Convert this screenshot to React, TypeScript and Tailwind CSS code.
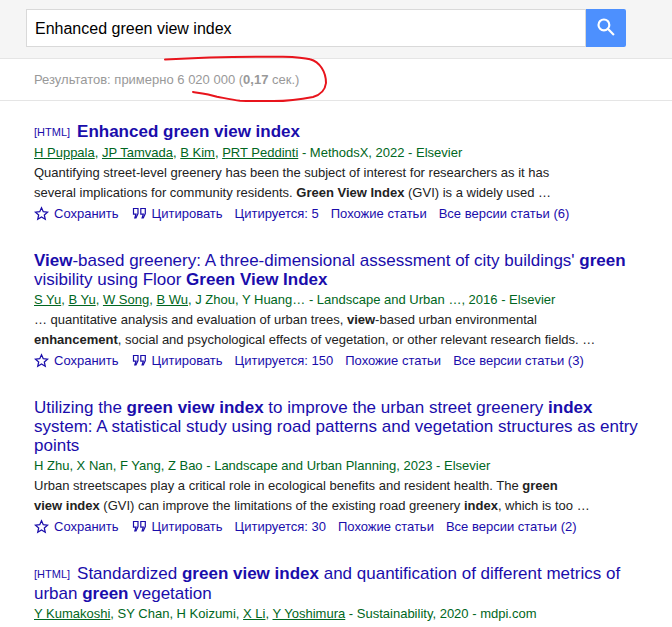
import React from "react";

const Star = () => (
  <svg width="15" height="15" viewBox="0 0 24 24" fill="none" stroke="#1a0dab" strokeWidth="2" className="shrink-0">
    <path d="M12 2.8l2.8 6.3 6.9.7-5.2 4.6 1.5 6.8-6-3.5-6 3.5 1.5-6.8-5.2-4.6 6.9-.7z" />
  </svg>
);
const Quote = () => (
  <svg width="15" height="15" viewBox="0 0 15 15" fill="none" stroke="#1a0dab" strokeWidth="1.2" className="shrink-0">
    <path d="M1.5 2.5h4.5v5l-2 4.5h-1.2l1.2-3.8H1.5z" />
    <path d="M8.8 2.5h4.5v5l-2 4.5h-1.2l1.2-3.8H8.8z" />
  </svg>
);

const B = ({ children }: { children: React.ReactNode }) => <b className="font-bold">{children}</b>;
const U = ({ children }: { children: React.ReactNode }) => <span className="underline">{children}</span>;

function Actions({ cited, versions }: { cited: string; versions: string }) {
  return (
    <div className="flex items-center gap-[12px] text-[13px] leading-[20px] text-[#1a0dab] mt-[1.5px]">
      <span className="flex items-center gap-[5px] mr-[1px]"><Star />Сохранить</span>
      <span className="flex items-center gap-[5px]"><Quote />Цитировать</span>
      <span>Цитируется: {cited}</span>
      <span>Похожие статьи</span>
      <span>Все версии статьи ({versions})</span>
    </div>
  );
}

function Result({ title, authors, snippet, cited, versions, className }: {
  title: React.ReactNode; authors: React.ReactNode; snippet?: React.ReactNode; cited?: string; versions?: string; className: string;
}) {
  return (
    <div className={className}>
      <div className="text-[17px] leading-[19px] text-[#1a0dab]">{title}</div>
      <div className="text-[13px] leading-[19px] text-[#006621] mt-[1.5px]">{authors}</div>
      {snippet && <div className="text-[13px] leading-[19.5px] text-[#222222] mt-[1px]">{snippet}</div>}
      {cited && <Actions cited={cited} versions={versions!} />}
    </div>
  );
}

const Html = () => <span className="text-[11px] mr-[7px] align-[1px]">[HTML]</span>;

export default function App() {
  return (
    <div className="relative w-[672px] h-[627px] overflow-hidden bg-white font-['Liberation_Sans',Arial,sans-serif]">
      <div className="h-[59px] bg-[#f5f5f5] border-b border-[#e5e5e5] pl-[26px] pt-[9px]">
        <div className="flex w-[600px] h-[38px]">
          <div className="flex-1 bg-white border border-[#d9d9d9] pl-[8px] text-[16px] leading-[37px] text-black">Enhanced green view index</div>
          <div className="w-[40px] bg-[#4d90fe] rounded-r-[2px] flex items-center justify-center pb-[2px]">
            <svg width="20" height="20" viewBox="0 0 24 24" fill="none" stroke="white" strokeWidth="2.6">
              <circle cx="9.5" cy="9.5" r="6.5" />
              <path d="M14.5 14.5L21.5 21.5" />
            </svg>
          </div>
        </div>
      </div>
      <div className="h-[42px] border-b border-[#e5e5e5] pl-[34px] text-[13px] leading-[42px] text-[#999999]">
        Результатов: примерно 6 020 000 (<b>0,17</b> сек.)
      </div>

      <Result
        className="pl-[34px] pr-[30px] pt-[20.5px]"
        title={<><Html /><b>Enhanced green view index</b></>}
        authors={<><U>H Puppala</U>, <U>JP Tamvada</U>, <U>B Kim</U>, <U>PRT Peddinti</U> - MethodsX, 2022 - Elsevier</>}
        snippet={<>Quantifying street-level greenery has been the subject of interest for researchers as it has<br />several implications for community residents. <B>Green View Index</B> (GVI) is a widely used …</>}
        cited="5" versions="6"
      />
      <Result
        className="pl-[34px] pr-[30px] pt-[27px]"
        title={<><B>View</B>-based greenery: A three-dimensional assessment of city buildings' <B>green</B><br />visibility using Floor <B>Green View Index</B></>}
        authors={<><U>S Yu</U>, <U>B Yu</U>, <U>W Song</U>, <U>B Wu</U>, J Zhou, Y Huang… - Landscape and Urban …, 2016 - Elsevier</>}
        snippet={<>… quantitative analysis and evaluation of urban trees, <B>view</B>-based urban environmental<br /><B>enhancement</B>, social and psychological effects of vegetation, or other relevant research fields. …</>}
        cited="150" versions="3"
      />
      <Result
        className="pl-[34px] pr-[30px] pt-[27px]"
        title={<>Utilizing the <B>green view index</B> to improve the urban street greenery <B>index</B><br />system: A statistical study using road patterns and vegetation structures as entry<br />points</>}
        authors={<>H Zhu, X Nan, F Yang, Z Bao - Landscape and Urban Planning, 2023 - Elsevier</>}
        snippet={<>Urban streetscapes play a critical role in ecological benefits and resident health. The <B>green</B><br /><B>view index</B> (GVI) can improve the limitations of the existing road greenery <B>index</B>, which is too …</>}
        cited="30" versions="2"
      />
      <Result
        className="pl-[34px] pr-[30px] pt-[27px]"
        title={<><Html />Standardized <B>green view index</B> and quantification of different metrics of<br />urban <B>green</B> vegetation</>}
        authors={<><U>Y Kumakoshi</U>, SY Chan, H Koizumi, <U>X Li</U>, <U>Y Yoshimura</U> - Sustainability, 2020 - mdpi.com</>}
      />

      <svg className="absolute left-0 top-0 pointer-events-none" width="672" height="627" fill="none">
        <path d="M165 59.5C200 57.5 250 56.5 283 56.7C295 57 304 57.5 310 59.3C320 62 326 72 326 83C325 91 320 95 313 97C298 100 280 101.5 267 101C255 101 247 101 240 100.7C232 100 224 98 217 96.7C209 94 200 93 193 92" stroke="#e8141c" strokeWidth="2" strokeLinecap="round" />
      </svg>
    </div>
  );
}
